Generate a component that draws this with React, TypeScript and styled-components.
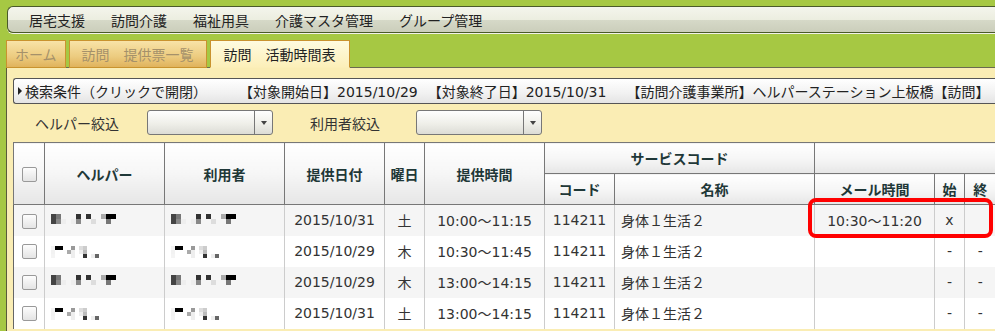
import React from "react";
import styled, { createGlobalStyle } from "styled-components";

const GlobalStyle = createGlobalStyle`
  html, body {
    margin: 0;
    padding: 0;
    background: #a6c843;
    overflow: hidden;
  }
  body {
    font-family: "DejaVu Sans", "Noto Sans CJK JP", sans-serif;
    font-size: 14px;
    color: #222;
  }
`;

const Page = styled.div`
  width: 995px;
  height: 331px;
  overflow: hidden;
`;

const MenuBar = styled.nav`
  display: flex;
  align-items: center;
  height: 25px;
  margin: 6px 0 0 7px;
  padding-left: 8px;
  border: 1px solid #4a5a2a;
  border-right: none;
  border-radius: 6px 0 0 6px;
  background: linear-gradient(#f4f5ec 0%, #eceee0 50%, #d6d9c8 52%, #cbcebb 100%);
  box-shadow: 0 1px 0 #f2f2ea;
`;

const MenuItem = styled.span`
  padding: 0 13px 0 13px;
  font-size: 14px;
  color: #222;
  white-space: nowrap;
`;

const TabRow = styled.div`
  display: flex;
  align-items: flex-end;
  gap: 3px;
  margin-top: 7px;
  padding-left: 6px;
  position: relative;
  z-index: 1;
  margin-bottom: -1px;
`;

const Tab = styled.div<{ $active?: boolean; $pad?: number }>`
  height: 26px;
  padding: 0 ${(p) => p.$pad ?? 8}px;
  display: flex;
  align-items: center;
  font-size: 14px;
  white-space: pre;
  border: 1px solid #c9932e;
  border-bottom: ${(p) => (p.$active ? "1px solid #fbeeb8" : "1px solid #c9932e")};
  color: ${(p) => (p.$active ? "#222" : "#a5916a")};
  background: ${(p) =>
    p.$active
      ? "linear-gradient(#fefbe0, #fcefb9)"
      : "linear-gradient(#f8e3a8 0%, #eccb7f 60%, #e0b35c 100%)"};
`;

const Panel = styled.div`
  margin-left: 6px;
  border-left: 1px solid #5a5a3a;
  border-top: 1px solid #6a6a50;
  background: #faedb4;
  padding: 10px 0 0 6px;
  height: 270px;
`;

const SearchBar = styled.div`
  height: 24px;
  display: flex;
  align-items: center;
  border: 1px solid #555;
  border-right: none;
  border-radius: 3px 0 0 3px;
  background: linear-gradient(#ffffff, #f1f1f1 60%, #e4e4e4);
  padding-left: 4px;
  white-space: nowrap;
  font-size: 14px;
  color: #222;
`;

const Caret = styled.span`
  display: inline-block;
  width: 0;
  height: 0;
  border-style: solid;
  border-width: 4px 0 4px 4px;
  border-color: transparent transparent transparent #222;
  margin-right: 3px;
`;

const Cond = styled.span<{ $gap?: number }>`
  margin-left: ${(p) => p.$gap ?? 0}px;
`;

const FilterRow = styled.div`
  display: flex;
  align-items: center;
  height: 25px;
  margin-top: 6px;
`;

const FilterLabel = styled.span<{ $w: number; $indent: number }>`
  width: ${(p) => p.$w}px;
  padding-left: ${(p) => p.$indent}px;
  box-sizing: border-box;
  color: #333;
  font-size: 14px;
`;

const Select = styled.div`
  width: 126px;
  height: 25px;
  box-sizing: border-box;
  display: flex;
  justify-content: flex-end;
  border: 1px solid #777;
  border-radius: 3px;
  background: linear-gradient(#fefefe, #efefe9 55%, #dcdcd6);
`;

const SelectButton = styled.div`
  width: 17px;
  border-left: 1px solid #777;
  display: flex;
  align-items: center;
  justify-content: center;
  &::after {
    content: "";
    border-style: solid;
    border-width: 4px 3.5px 0 3.5px;
    border-color: #444 transparent transparent transparent;
  }
`;

const TableWrap = styled.div`
  position: relative;
  margin-top: 7px;
`;

const Grid = styled.table`
  border-collapse: collapse;
  table-layout: fixed;
  width: 982px;
  font-size: 14px;
`;

const Th = styled.th`
  height: 30px;
  padding: 0;
  border: 1px solid #777;
  background: linear-gradient(#ffffff, #f6f6f6 50%, #e6e6e6);
  color: #1f3838;
  font-weight: bold;
  font-size: 14px;
  text-align: center;
  white-space: nowrap;
  &:last-child {
    border-right: none;
  }
`;

const Row = styled.tr<{ $alt?: boolean }>`
  height: 31px;
  background: ${(p) => (p.$alt ? "#f5f5f5" : "#ffffff")};
`;

const Td = styled.td<{ $align?: "left" | "center" }>`
  padding: 0 ${(p) => (p.$align === "left" ? "6px" : "0")};
  border-left: 1px solid #ccc;
  border-right: 1px solid #ccc;
  text-align: ${(p) => p.$align ?? "center"};
  color: #333;
  white-space: nowrap;
  &:first-child {
    border-left: 1px solid #666;
  }
  &:last-child {
    border-right: none;
  }
`;

const Check = styled.span`
  display: inline-block;
  width: 13px;
  height: 13px;
  border: 1px solid #999;
  border-radius: 2px;
  background: linear-gradient(#fdfdfd, #e4e4e4);
  vertical-align: middle;
`;

const Highlight = styled.div`
  position: absolute;
  left: 795px;
  top: 56px;
  width: 177px;
  height: 32px;
  border: 4px solid #ff0000;
  border-radius: 8px;
  pointer-events: none;
`;

type Cell = [number, number, string];

const mosaicA: Cell[] = [
  [0, 0, "#444"], [1, 0, "#777"], [5, 0, "#333"], [7, 0, "#333"], [10, 0, "#aaa"], [11, 0, "#000"], [12, 0, "#000"],
  [0, 1, "#444"], [1, 1, "#888"], [2, 1, "#eee"], [4, 1, "#eee"], [5, 1, "#888"], [8, 1, "#ddd"], [11, 1, "#777"],
];

const mosaicB: Cell[] = [
  [0, 0, "#f2f2f2"], [1, 0, "#000"], [2, 0, "#000"], [5, 0, "#999"], [7, 0, "#ddd"], [8, 0, "#ccc"],
  [0, 1, "#f2f2f2"], [4, 1, "#aaa"], [5, 1, "#eee"], [7, 1, "#eee"], [8, 1, "#bbb"],
  [0, 2, "#f4f4f4"], [5, 2, "#eee"], [8, 2, "#333"], [10, 2, "#eee"], [11, 2, "#666"],
];

function Mosaic({ cells, size }: { cells: Cell[]; size: number }) {
  return (
    <svg width={size * 14} height={size * 3} style={{ verticalAlign: "middle" }}>
      {cells.map(([x, y, c], i) => (
        <rect key={i} x={x * size} y={y * size} width={size} height={size} fill={c} />
      ))}
    </svg>
  );
}

const rows = [
  { m: "A", date: "2015/10/31", dow: "土", time: "10:00～11:15", mail: "10:30～11:20", s: "x", e: "" },
  { m: "B", date: "2015/10/29", dow: "木", time: "10:30～11:45", mail: "", s: "-", e: "-" },
  { m: "A", date: "2015/10/29", dow: "木", time: "13:00～14:15", mail: "", s: "-", e: "-" },
  { m: "B", date: "2015/10/31", dow: "土", time: "13:00～14:15", mail: "", s: "-", e: "-" },
];

const widths = [31, 120, 120, 100, 40, 120, 70, 200, 120, 30, 31];

export default function App() {
  return (
    <Page>
      <GlobalStyle />
      <MenuBar>
        <MenuItem>居宅支援</MenuItem>
        <MenuItem>訪問介護</MenuItem>
        <MenuItem>福祉用具</MenuItem>
        <MenuItem>介護マスタ管理</MenuItem>
        <MenuItem>グループ管理</MenuItem>
      </MenuBar>

      <TabRow>
        <Tab>ホーム</Tab>
        <Tab $pad={12}>訪問　提供票一覧</Tab>
        <Tab $active $pad={13}>訪問　活動時間表</Tab>
      </TabRow>

      <Panel>
        <SearchBar>
          <Caret />
          <span>検索条件（クリックで開閉）</span>
          <Cond $gap={32}>【対象開始日】2015/10/29</Cond>
          <Cond $gap={10}>【対象終了日】2015/10/31</Cond>
          <Cond $gap={20}>【訪問介護事業所】ヘルパーステーション上板橋【訪問】</Cond>
        </SearchBar>

        <FilterRow>
          <FilterLabel $w={134} $indent={22}>ヘルパー絞込</FilterLabel>
          <Select>
            <SelectButton />
          </Select>
          <FilterLabel $w={143} $indent={37}>利用者絞込</FilterLabel>
          <Select>
            <SelectButton />
          </Select>
        </FilterRow>

        <TableWrap>
          <Grid>
            <colgroup>
              {widths.map((w, i) => (
                <col key={i} style={{ width: w }} />
              ))}
            </colgroup>
            <thead>
              <tr>
                <Th rowSpan={2}>
                  <Check />
                </Th>
                <Th rowSpan={2}>ヘルパー</Th>
                <Th rowSpan={2}>利用者</Th>
                <Th rowSpan={2}>提供日付</Th>
                <Th rowSpan={2}>曜日</Th>
                <Th rowSpan={2}>提供時間</Th>
                <Th colSpan={2}>サービスコード</Th>
                <Th colSpan={3}></Th>
              </tr>
              <tr>
                <Th>コード</Th>
                <Th>名称</Th>
                <Th>メール時間</Th>
                <Th>始</Th>
                <Th>終</Th>
              </tr>
            </thead>
            <tbody>
              {rows.map((r, i) => (
                <Row key={i} $alt={i % 2 === 0}>
                  <Td>
                    <Check />
                  </Td>
                  <Td $align="left">
                    {r.m === "A" ? <Mosaic cells={mosaicA} size={5} /> : <Mosaic cells={mosaicB} size={4} />}
                  </Td>
                  <Td $align="left">
                    {r.m === "A" ? <Mosaic cells={mosaicA} size={5} /> : <Mosaic cells={mosaicB} size={4} />}
                  </Td>
                  <Td>{r.date}</Td>
                  <Td>{r.dow}</Td>
                  <Td>{r.time}</Td>
                  <Td>114211</Td>
                  <Td $align="left">身体１生活２</Td>
                  <Td>{r.mail}</Td>
                  <Td>{r.s}</Td>
                  <Td>{r.e}</Td>
                </Row>
              ))}
            </tbody>
          </Grid>
          <Highlight />
        </TableWrap>
      </Panel>
    </Page>
  );
}
